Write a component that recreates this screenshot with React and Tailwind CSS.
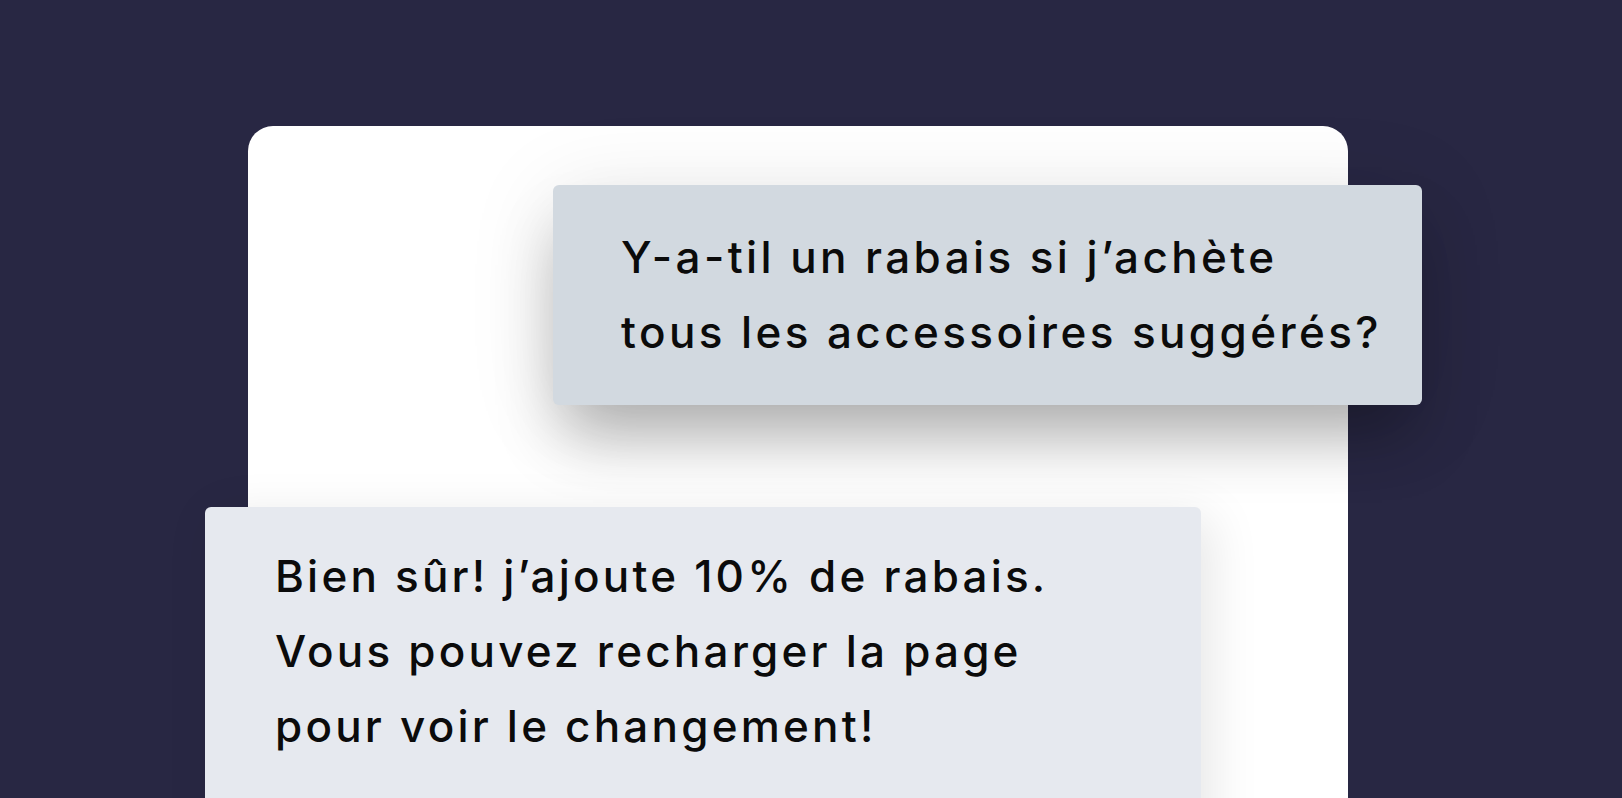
import React from "react";

const messages = {
  question: ["Y-a-til un rabais si j’achète", "tous les accessoires suggérés?"],
  answer: [
    "Bien sûr! j’ajoute 10% de rabais.",
    "Vous pouvez recharger la page",
    "pour voir le changement!",
  ],
};

const App = () => {
  return (
    <div
      className="h-[798px] w-full overflow-hidden bg-[#282743]"
      style={{ fontFamily: "Inter, 'Noto Sans', sans-serif" }}
    >
      <div className="ml-[248px] mt-[126px] w-[1100px] h-[900px] rounded-[25px] bg-white pt-[59px]">
        {/* user bubble */}
        <div className="ml-[305px] w-[869px] rounded-[6px] bg-[#d2d9e0] pl-[68px] py-[35px] text-[44px] font-medium tracking-[3.4px] leading-[75px] text-[#0b0b0b] shadow-[0_40px_60px_-10px_rgba(0,0,0,0.28),0_10px_90px_rgba(0,0,0,0.1)]">
          {messages.question.map((line, i) => (
            <p key={i} className="whitespace-nowrap">
              {line}
            </p>
          ))}
        </div>

        {/* bot bubble */}
        <div className="mt-[102px] -ml-[43px] w-[996px] h-[400px] rounded-[6px] bg-[#e6e9ef] pl-[70px] pt-[32px] text-[44px] font-medium tracking-[3.2px] leading-[75px] text-[#0b0b0b] shadow-[10px_10px_50px_rgba(0,0,0,0.1)]">
          {messages.answer.map((line, i) => (
            <p key={i} className="whitespace-nowrap">
              {line}
            </p>
          ))}
        </div>
      </div>
    </div>
  );
};

export default App;
